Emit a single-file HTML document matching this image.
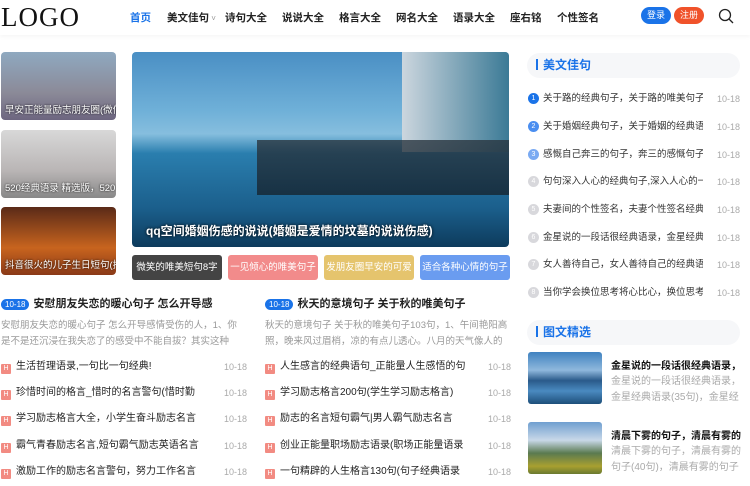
<!DOCTYPE html>
<html><head><meta charset="utf-8"><style>
*{margin:0;padding:0;box-sizing:border-box}
body{width:750px;height:486px;overflow:hidden;background:#fff;font-family:"Liberation Sans","Noto Sans CJK SC",sans-serif;position:relative;color:#333}
.a{position:absolute}
.hdr{left:0;top:0;width:750px;height:35px;background:#fff;box-shadow:0 2px 4px rgba(0,0,0,.04)}
.logo{left:1px;top:2px;font-family:"Liberation Serif",serif;font-size:27px;letter-spacing:1px;color:#111}
.nav{top:10px;font-size:10.5px;font-weight:bold;color:#222;white-space:nowrap}
.btn{top:7px;height:17px;border-radius:9px;color:#fff;font-size:9px;line-height:17px;text-align:center;width:30px}
.th{left:1px;width:115px;height:68px;border-radius:4px;overflow:hidden}
.th span{position:absolute;left:4px;bottom:4px;font-size:9.5px;color:#fff;white-space:nowrap;text-shadow:0 0 2px #000}
.tag{top:255px;height:25px;width:90px;border-radius:3px;color:#fff;font-size:9.5px;line-height:25px;text-align:center;white-space:nowrap;overflow:hidden}
.h{font-size:11px;font-weight:bold;color:#222;top:295px;white-space:nowrap}
.d{display:inline-block;background:#1a73e8;color:#fff;font-size:8px;border-radius:7px;padding:1px 4px;margin-right:4px;font-weight:normal}
.desc{font-size:9.5px;color:#999;line-height:16px;top:318px;width:243px;height:32px;overflow:hidden}
.li{font-size:10px;color:#222;height:14px;line-height:14px;white-space:nowrap}
.li i{display:inline-block;width:10px;height:10px;background:#f28b82;color:#fff;font-size:7px;line-height:10px;text-align:center;font-style:normal;border-radius:1px;margin-right:5px;vertical-align:-1px}
.dt{font-size:9px;color:#aaa}
.sh{left:527px;width:213px;height:25px;background:#f6f7f9;border-radius:13px;font-size:12px;font-weight:bold;color:#1a73e8;line-height:25px;padding-left:9px}
.sh b{display:inline-block;width:2px;height:11px;background:#1a73e8;margin-right:5px;vertical-align:-1px}
.rl{left:528px;width:212px;font-size:9.5px;color:#333;height:14px;line-height:14px;white-space:nowrap}
.rl s{text-decoration:none;display:inline-block;width:160px;overflow:hidden;vertical-align:top}
.rl i{display:inline-block;width:11px;height:11px;border-radius:6px;color:#fff;font-size:7px;line-height:11px;text-align:center;font-style:normal;margin-right:4px;vertical-align:top;margin-top:1px}
.rl .dt{position:absolute;right:0;top:0}
.rt{font-size:10px;font-weight:bold;color:#111;white-space:nowrap;width:130px;overflow:hidden}
.rd{width:130px;font-size:10px;color:#aaa;line-height:16px;height:32px;overflow:hidden}
</style></head><body>
<div class="a hdr"></div>
<div class="a logo">LOGO</div>
<div class="a nav" style="left:130px;color:#1a73e8">首页</div>
<div class="a nav" style="left:167px">美文佳句<span style="font-weight:normal;font-size:8px;color:#999"> ˅</span></div>
<div class="a nav" style="left:225px">诗句大全</div>
<div class="a nav" style="left:282px">说说大全</div>
<div class="a nav" style="left:339px">格言大全</div>
<div class="a nav" style="left:396px">网名大全</div>
<div class="a nav" style="left:453px">语录大全</div>
<div class="a nav" style="left:510px">座右铭</div>
<div class="a nav" style="left:557px">个性签名</div>
<div class="a btn" style="left:641px;background:#1a73e8">登录</div>
<div class="a btn" style="left:674px;background:#f0522a">注册</div>
<svg class="a" style="left:718px;top:8px" width="16" height="16"><circle cx="7" cy="7" r="5.5" fill="none" stroke="#222" stroke-width="1.3"/><path d="M11 11l4 4" stroke="#222" stroke-width="1.3"/></svg>

<div class="a th" style="top:52px;background:linear-gradient(#8fa9c0,#8b8a98 60%,#6d6680)"><span>早安正能量励志朋友圈(微信</span></div>
<div class="a th" style="top:130px;background:linear-gradient(#d8d8d8,#b9b5b5 60%,#888)"><span>520经典语录 精选版，520</span></div>
<div class="a th" style="top:207px;background:linear-gradient(#5a2a18,#c8641e 60%,#8a3a18)"><span>抖音很火的儿子生日短句(抖</span></div>

<div class="a" style="left:132px;top:52px;width:377px;height:195px;border-radius:4px;overflow:hidden;background:linear-gradient(180deg,#4a8fc4 0%,#6fb0d8 30%,#86bede 42%,#2a7eae 52%,#1b5f8c 80%,#0d3b5c 100%)">
<div class="a" style="left:270px;top:0;width:107px;height:100px;background:linear-gradient(90deg,#ccd6de,#3b7a96)"></div>
<div class="a" style="left:125px;top:88px;width:252px;height:55px;background:linear-gradient(#2a3640,#152430);opacity:.8"></div>
<div class="a" style="left:14px;top:170px;font-size:12px;font-weight:bold;color:#fff;text-shadow:0 0 3px #000;white-space:nowrap">qq空间婚姻伤感的说说(婚姻是爱情的坟墓的说说伤感)</div>
</div>

<div class="a tag" style="left:132px;background:#444">微笑的唯美短句8字</div>
<div class="a tag" style="left:228px;background:#f28b8b">一见倾心的唯美句子</div>
<div class="a tag" style="left:324px;background:#e5c46d">发朋友圈早安的可爱</div>
<div class="a tag" style="left:420px;background:#6a9cf0">适合各种心情的句子</div>

<div class="a h" style="left:1px"><span class="d">10-18</span>安慰朋友失恋的暖心句子 怎么开导感</div>
<div class="a h" style="left:265px"><span class="d">10-18</span>秋天的意境句子 关于秋的唯美句子</div>
<div class="a desc" style="left:1px">安慰朋友失恋的暖心句子 怎么开导感情受伤的人，1、你是不是还沉浸在我失恋了的感受中不能自拔？其实这种事，真的没什</div>
<div class="a desc" style="left:265px">秋天的意境句子 关于秋的唯美句子103句，1、午间艳阳高照，晚来风过眉梢，凉的有点儿透心。八月的天气像人的心情，总是</div>

<div class="a li" style="left:1px;top:360px"><i>H</i>生活哲理语录,一句比一句经典!</div>
<div class="a li" style="left:1px;top:386px"><i>H</i>珍惜时间的格言_惜时的名言警句(惜时勤</div>
<div class="a li" style="left:1px;top:412px"><i>H</i>学习励志格言大全，小学生奋斗励志名言</div>
<div class="a li" style="left:1px;top:439px"><i>H</i>霸气青春励志名言,短句霸气励志英语名言</div>
<div class="a li" style="left:1px;top:465px"><i>H</i>激励工作的励志名言警句，努力工作名言</div>
<div class="a li" style="left:265px;top:360px"><i>H</i>人生感言的经典语句_正能量人生感悟的句</div>
<div class="a li" style="left:265px;top:386px"><i>H</i>学习励志格言200句(学生学习励志格言)</div>
<div class="a li" style="left:265px;top:412px"><i>H</i>励志的名言短句霸气|男人霸气励志名言</div>
<div class="a li" style="left:265px;top:439px"><i>H</i>创业正能量职场励志语录(职场正能量语录</div>
<div class="a li" style="left:265px;top:465px"><i>H</i>一句精辟的人生格言130句(句子经典语录</div>
<div class="a dt" style="left:224px;top:362px">10-18</div><div class="a dt" style="left:224px;top:388px">10-18</div><div class="a dt" style="left:224px;top:414px">10-18</div><div class="a dt" style="left:224px;top:441px">10-18</div><div class="a dt" style="left:224px;top:467px">10-18</div>
<div class="a dt" style="left:488px;top:362px">10-18</div><div class="a dt" style="left:488px;top:388px">10-18</div><div class="a dt" style="left:488px;top:414px">10-18</div><div class="a dt" style="left:488px;top:441px">10-18</div><div class="a dt" style="left:488px;top:467px">10-18</div>

<div class="a sh" style="top:53px"><b></b>美文佳句</div>
<div class="a rl" style="top:92px"><i style="background:#1a73e8">1</i><s>关于路的经典句子，关于路的唯美句子(...</s><span class="dt">10-18</span></div>
<div class="a rl" style="top:120px"><i style="background:#4a8ef0">2</i><s>关于婚姻经典句子，关于婚姻的经典语...</s><span class="dt">10-18</span></div>
<div class="a rl" style="top:148px"><i style="background:#7aaaf2">3</i><s>感慨自己奔三的句子，奔三的感慨句子...</s><span class="dt">10-18</span></div>
<div class="a rl" style="top:175px"><i style="background:#d8d8dc">4</i><s>句句深入人心的经典句子,深入人心的一...</s><span class="dt">10-18</span></div>
<div class="a rl" style="top:203px"><i style="background:#d8d8dc">5</i><s>夫妻间的个性签名，夫妻个性签名经典...</s><span class="dt">10-18</span></div>
<div class="a rl" style="top:231px"><i style="background:#d8d8dc">6</i><s>金星说的一段话很经典语录，金星经典...</s><span class="dt">10-18</span></div>
<div class="a rl" style="top:258px"><i style="background:#d8d8dc">7</i><s>女人善待自己，女人善待自己的经典语...</s><span class="dt">10-18</span></div>
<div class="a rl" style="top:286px"><i style="background:#d8d8dc">8</i><s>当你学会换位思考将心比心，换位思考...</s><span class="dt">10-18</span></div>

<div class="a sh" style="top:320px"><b></b>图文精选</div>
<div class="a" style="left:528px;top:352px;width:74px;height:52px;border-radius:3px;background:linear-gradient(#3f82c0,#8fb8dc 35%,#2a5a8a 55%,#4a8ac0 75%,#1d4f7a)"></div>
<div class="a rt" style="left:611px;top:357px">金星说的一段话很经典语录，金...</div>
<div class="a rd" style="left:611px;top:374px">金星说的一段话很经典语录，金星经典语录(35句)，金星经典</div>
<div class="a" style="left:528px;top:422px;width:74px;height:52px;border-radius:3px;background:linear-gradient(#6f9fd0,#c8d8e8 35%,#5a7a50 60%,#a8a030 85%,#6a7a30)"></div>
<div class="a rt" style="left:611px;top:427px">清晨下雾的句子，清晨有雾的句...</div>
<div class="a rd" style="left:611px;top:444px">清晨下雾的句子，清晨有雾的句子(40句)，清晨有雾的句子1</div>
</body></html>
